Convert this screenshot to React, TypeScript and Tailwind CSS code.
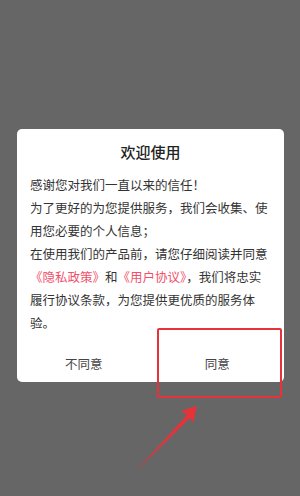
import React from 'react';

export default function App() {
  return (
    <div
      className="relative w-[300px] h-[496px] overflow-hidden bg-[#666666] pt-[129px]"
      style={{ fontFamily: '"Noto Sans CJK SC", "Noto Sans", sans-serif' }}
    >
      {/* Dialog */}
      <div className="ml-[17px] w-[267px] h-[253px] bg-white rounded-[5px] flex flex-col">
        <div className="pt-[12px] text-center text-[15px] leading-[22px] font-medium text-[#222222]">
          欢迎使用
        </div>
        <div className="mt-[10px] pl-[13px] pr-[14px] text-[12.5px] leading-[23px] text-[#333333]">
          <p>感谢您对我们一直以来的信任！</p>
          <p>
            为了更好的为您提供服务，我们会收集、使用您必要的个人信息；
          </p>
          <p>
            在使用我们的产品前，请您仔细阅读并同意
            <span className="text-[#f0506a]">《隐私政策》</span>和
            <span className="text-[#f0506a]">《用户协议》</span>
            ，我们将忠实履行协议条款，为您提供更优质的服务体验。
          </p>
        </div>
        <div className="mt-auto h-[36px] flex items-center text-[12.5px] text-[#444444]">
          <button className="flex-1 h-full">不同意</button>
          <button className="flex-1 h-full">同意</button>
        </div>
      </div>

      {/* Annotation: highlight box */}
      <div className="absolute left-[157px] top-[328px] w-[125px] h-[70px] border-2 border-[#e8323a] rounded-[2px]" />

      {/* Annotation: arrow */}
      <svg className="absolute left-0 top-0" width="300" height="496" viewBox="0 0 300 496">
        <polygon
          points="197,406 181,411 187,415 136,471 190,418 193,423"
          fill="#e8323a"
        />
      </svg>
    </div>
  );
}
